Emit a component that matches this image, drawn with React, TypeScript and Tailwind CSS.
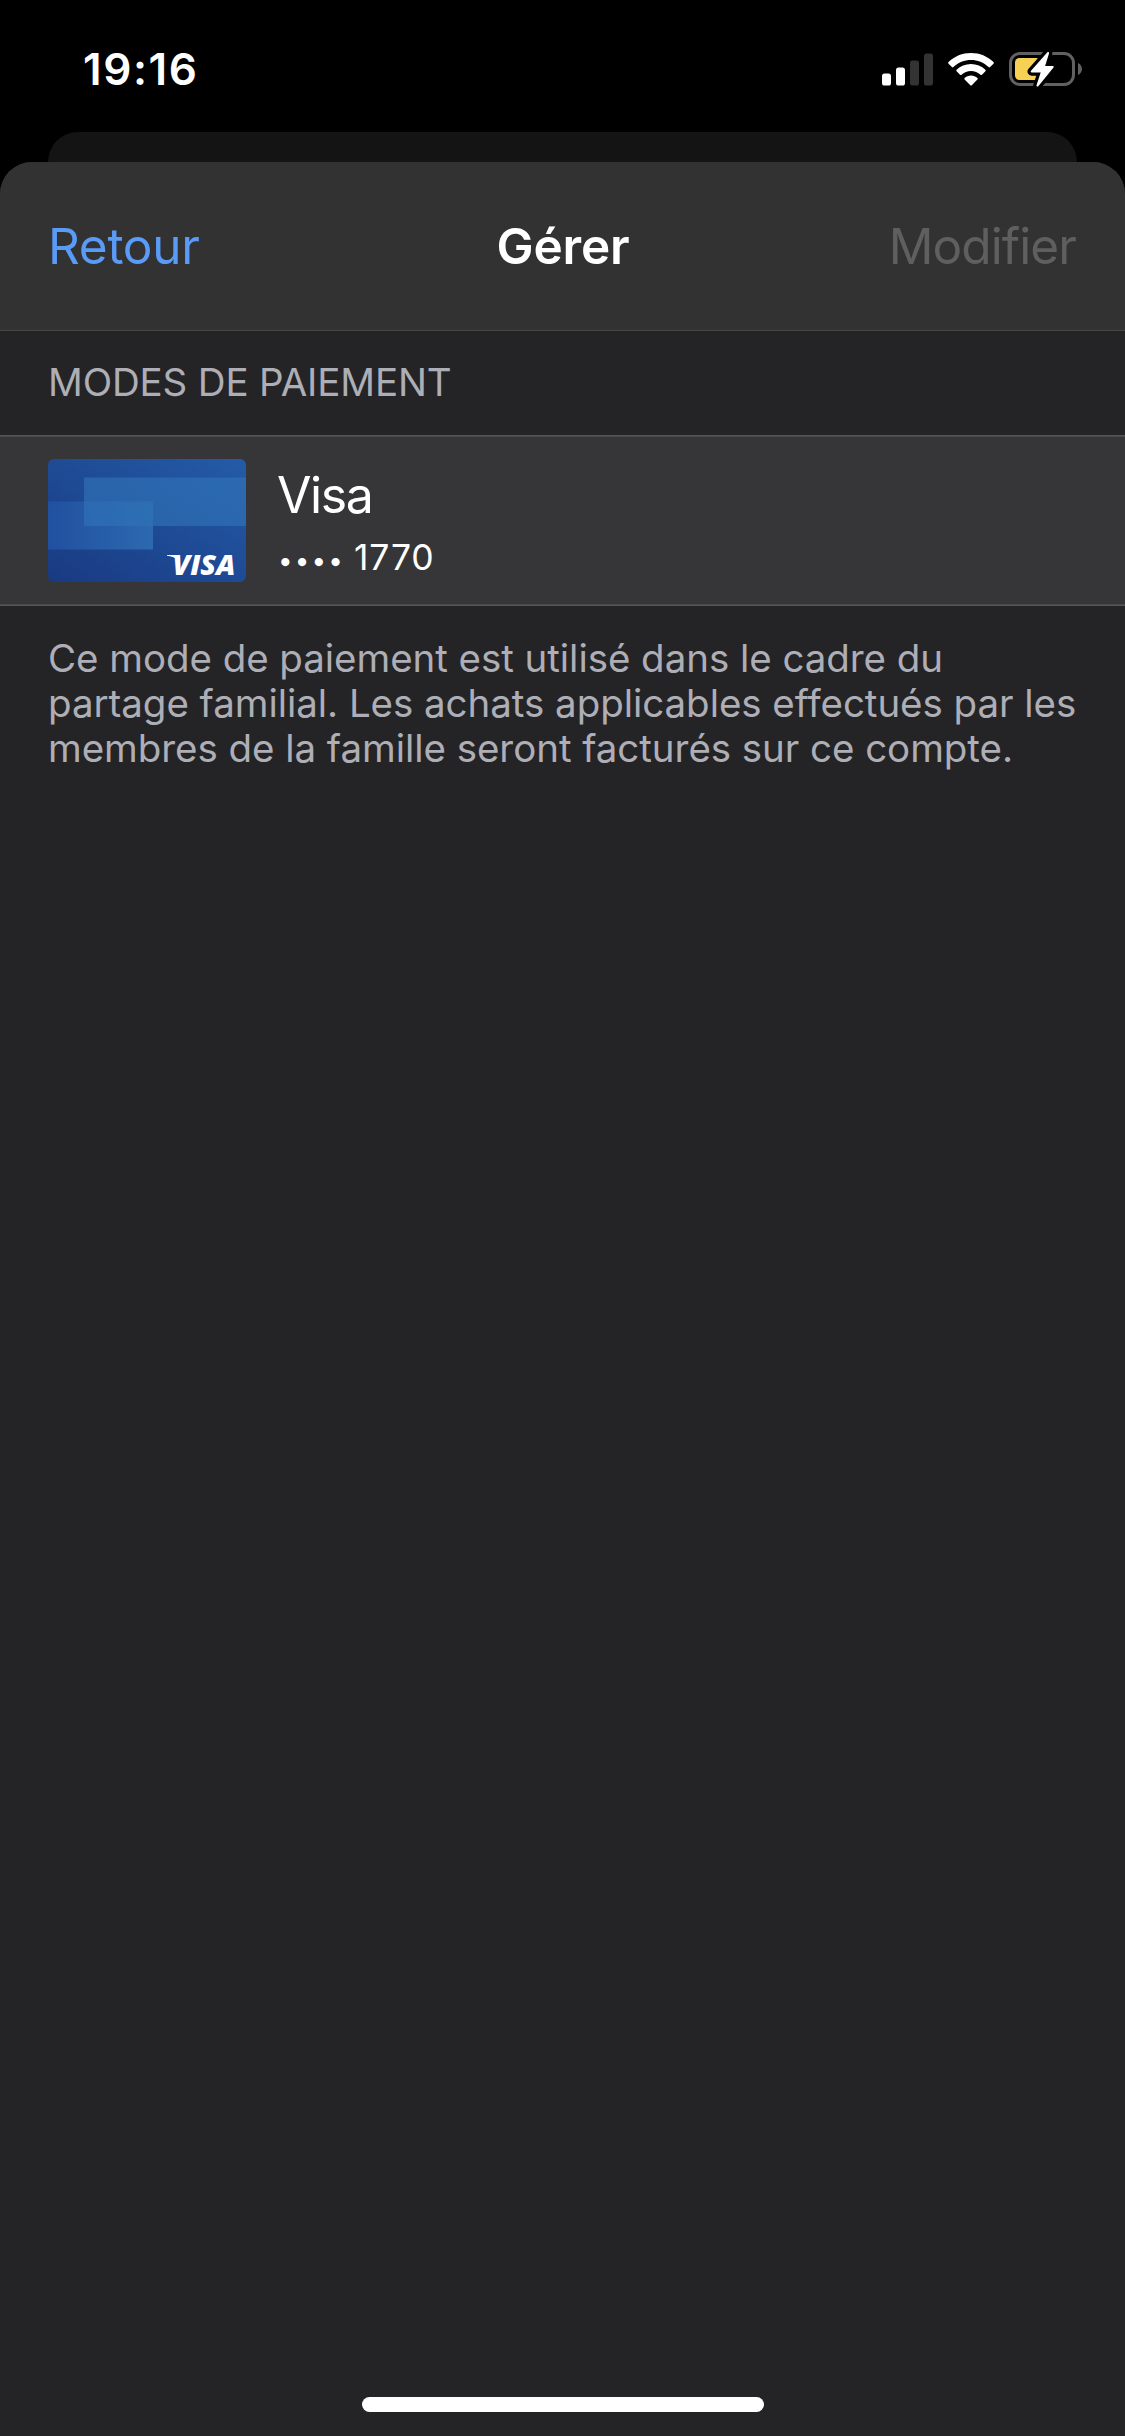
function SignalIcon() {
  return (
    <svg className="h-[33px] w-[51px]" viewBox="0 0 51 33">
      <rect x="0" y="20.5" width="9" height="12" rx="2.6" fill="#fff" />
      <rect x="14" y="14.5" width="9" height="18" rx="2.6" fill="#fff" />
      <rect x="28" y="7.5" width="9" height="25" rx="2.6" fill="#333" />
      <rect x="42" y="0.5" width="9" height="32" rx="2.6" fill="#333" />
    </svg>
  );
}

function WifiIcon() {
  return (
    <svg className="h-[33px] w-[46px]" viewBox="0 0 46 33" fill="#fff">
      <path d="M23 0C31.6 0 39.6 3.3 45.5 9.1c.5.5.5 1.1 0 1.6l-3.4 3.4c-.4.4-1.1.4-1.5 0C35.8 9.6 29.6 7 23 7S10.2 9.6 5.4 14.1c-.4.4-1.1.4-1.5 0L.5 10.7c-.5-.5-.5-1.1 0-1.6C6.4 3.3 14.4 0 23 0z" />
      <path d="M23 11c5.5 0 10.6 2.1 14.4 5.7.5.5.5 1.1 0 1.6L34 21.7c-.4.4-1.1.4-1.5 0C29.9 19.4 26.6 18 23 18s-6.9 1.4-9.5 3.7c-.4.4-1.1.4-1.5 0l-3.4-3.4c-.5-.5-.5-1.1 0-1.6C12.4 13.1 17.5 11 23 11z" />
      <path d="M23 22.6c2.5 0 4.7.9 6.4 2.4.5.4.5 1.1 0 1.5l-5.6 5.7c-.4.4-1.1.4-1.5 0l-5.7-5.7c-.4-.4-.4-1.1 0-1.5 1.7-1.5 4-2.4 6.4-2.4z" />
    </svg>
  );
}

function BatteryIcon() {
  return (
    <svg className="h-[38px] w-[74px]" viewBox="0 0 74 38">
      <rect x="1.5" y="3.5" width="63" height="31" rx="9.5" fill="none" stroke="#616161" strokeWidth="3" />
      <path d="M69 13c2.5 1 4 3.5 4 6s-1.5 5-4 6z" fill="#616161" />
      <rect x="6" y="8" width="26" height="22" rx="4.5" fill="#f7d154" />
      <path
        d="M38.2 2.5 22 20.8c-.6.7-.2 1.6.7 1.6h9L27.6 35c-.5 1.5 1 2 1.9 1L44.500 17.600c.6-.8.2-1.6-.7-1.6h-7.700l3.900-12.500c.4-1.400-1-2-1.800-1z"
        fill="#fff"
        stroke="#000"
        strokeWidth="6.5"
        strokeLinejoin="round"
        paintOrder="stroke"
      />
    </svg>
  );
}

function VisaCard() {
  return (
    <svg className="h-[123px] w-[198px] rounded-[6px]" viewBox="0 0 198 123">
      <defs>
        <linearGradient id="base" x1="0" y1="1" x2="1" y2="0">
          <stop offset="0" stopColor="#193a82" />
          <stop offset="1" stopColor="#245ba8" />
        </linearGradient>
        <linearGradient id="low" x1="0" y1="0" x2="1" y2="0">
          <stop offset="0" stopColor="#2150a0" />
          <stop offset="1" stopColor="#2c69b0" />
        </linearGradient>
      </defs>
      <rect width="198" height="123" fill="url(#base)" />
      <rect x="0" y="42.5" width="105" height="48" fill="url(#low)" />
      <rect x="36" y="18.5" width="162" height="48.5" fill="#2f71b6" fillOpacity=".68" />
      <path d="M119 96h9l2 5c-3-2.5-7-3.900-11-4.300z" fill="#fff" />
      <text
        x="124.5"
        y="116"
        textLength="63"
        lengthAdjust="spacingAndGlyphs"
        fill="#fff"
        className="font-['Open_Sans',sans-serif] text-[28px] font-extrabold italic"
      >
        VISA
      </text>
    </svg>
  );
}

const notice = [
  "Ce mode de paiement est utilisé dans le cadre du",
  "partage familial. Les achats applicables effectués par les",
  "membres de la famille seront facturés sur ce compte.",
];

export default function App() {
  return (
    <div className="flex h-[2436px] w-[1125px] flex-col overflow-hidden bg-black font-['Inter',sans-serif] text-white">
      <header className="flex h-[132px] shrink-0 items-start justify-between pt-[48px] pr-[42px] pl-[83px]">
        <time className="text-[44px] leading-[43px] font-semibold tracking-[1.6px]">19:16</time>
        <div className="flex items-center gap-[15px] pt-[2px]">
          <SignalIcon />
          <WifiIcon />
          <BatteryIcon />
        </div>
      </header>
      <div className="mx-[48px] h-[30px] shrink-0 rounded-t-[30px] bg-[#141414]" />
      <main className="flex grow flex-col rounded-t-[32px] bg-[#242426]">
        <nav className="grid h-[169px] grid-cols-3 items-center rounded-t-[32px] border-b border-[#464646] bg-[#323232] px-[48px] text-[49.5px] leading-[60px]">
          <button className="justify-self-start tracking-[-0.3px] text-[#5a9bf8]">Retour</button>
          <h1 className="justify-self-center pl-px font-semibold tracking-[-0.2px]">Gérer</h1>
          <button className="justify-self-end pr-px tracking-[-0.9px] text-[#5f5f5f]">Modifier</button>
        </nav>
        <h2 className="flex h-[104px] items-center px-[48px] text-[38.5px] tracking-[-0.15px] text-[#aeaeb6]">
          MODES DE PAIEMENT
        </h2>
        <section className="flex h-[171px] items-center gap-[31px] border-y border-[#565658] bg-[#363638] px-[48px] shadow-[inset_0_1px_0_#48484a,inset_0_-1px_0_#48484a]">
          <VisaCard />
          <div className="flex flex-col pt-[13px]">
            <p className="text-[50px] leading-[64px] tracking-[-1.4px]">Visa</p>
            <p className="flex items-baseline gap-[9px] pl-px text-[35.5px] leading-[61px]">
              <span className="text-[26px] tracking-[2.1px]">••••</span>
              <span className="tracking-[0.9px]">1770</span>
            </p>
          </div>
        </section>
        <p className="flex flex-col px-[48px] pt-[30px] text-[38.5px] leading-[45px] tracking-[-0.05px] text-[#aeaeb6]">
          {notice.map((line) => (
            <span key={line} className="whitespace-nowrap">
              {line}
            </span>
          ))}
        </p>
        <div className="mt-auto mb-[24px] h-[15px] w-[402px] self-center rounded-full bg-white" />
      </main>
    </div>
  );
}
